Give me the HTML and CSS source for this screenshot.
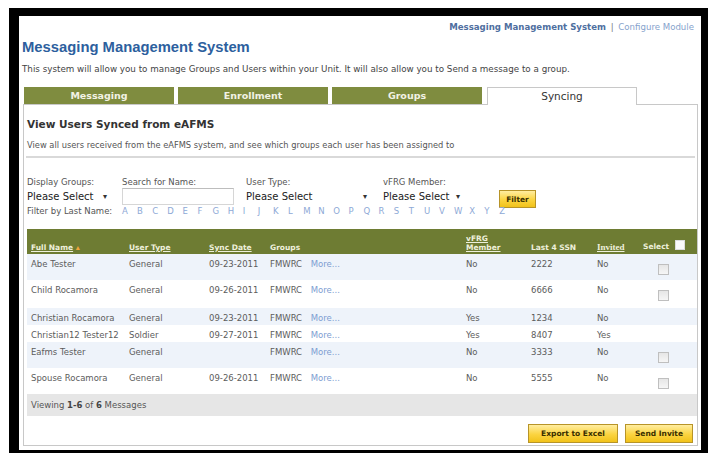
FILE: index.html
```html
<!DOCTYPE html>
<html>
<head>
<meta charset="utf-8">
<title>Messaging Management System</title>
<link rel="stylesheet" href="styles.css">
</head>
<body>
<div class="frame">
  <div class="toplinks">
    <a class="toplink-main" href="#">Messaging Management System</a>
    <span class="sep">|</span>
    <a class="toplink" href="#">Configure Module</a>
  </div>

  <h1 class="title">Messaging Management System</h1>
  <p class="intro">This system will allow you to manage Groups and Users within your Unit. It will also allow you to Send a message to a group.</p>

  <div class="tabs">
    <a class="tab" href="#">Messaging</a>
    <a class="tab" href="#">Enrollment</a>
    <a class="tab" href="#">Groups</a>
    <a class="tab active" href="#">Syncing</a>
  </div>

  <div class="panel">
    <h2 class="heading">View Users Synced from eAFMS</h2>
    <p class="desc">View all users received from the eAFMS system, and see which groups each user has been assigned to</p>
    <div class="rule"></div>

    <div class="filters">
      <div class="field field-groups">
        <span class="label">Display Groups:</span>
        <span class="select">Please Select <span class="caret">&#9662;</span></span>
      </div>
      <div class="field field-search">
        <span class="label">Search for Name:</span>
        <span class="textbox"></span>
      </div>
      <div class="field field-type">
        <span class="label">User Type:</span>
        <span class="select">Please Select <span class="caret">&#9662;</span></span>
      </div>
      <div class="field field-vfrg">
        <span class="label">vFRG Member:</span>
        <span class="select">Please Select <span class="caret">&#9662;</span></span>
      </div>
      <button class="btn btn-filter" type="button">Filter</button>
    </div>

    <div class="letters">
      <span class="letters-label">Filter by Last Name:</span>
      <a href="#">A</a><a href="#">B</a><a href="#">C</a><a href="#">D</a><a href="#">E</a><a href="#">F</a><a href="#">G</a><a href="#">H</a><a href="#">I</a><a href="#">J</a><a href="#">K</a><a href="#">L</a><a href="#">M</a><a href="#">N</a><a href="#">O</a><a href="#">P</a><a href="#">Q</a><a href="#">R</a><a href="#">S</a><a href="#">T</a><a href="#">U</a><a href="#">V</a><a href="#">W</a><a href="#">X</a><a href="#">Y</a><a href="#">Z</a>
    </div>

    <table class="grid">
      <colgroup>
        <col class="c-name"><col class="c-type"><col class="c-date"><col class="c-groups">
        <col class="c-vfrg"><col class="c-ssn"><col class="c-inv"><col class="c-sel">
      </colgroup>
      <thead>
        <tr>
          <th><a href="#">Full Name</a> <span class="sort">&#9652;</span></th>
          <th><a href="#">User Type</a></th>
          <th><a href="#">Sync Date</a></th>
          <th>Groups</th>
          <th><a href="#">vFRG<br>Member</a></th>
          <th>Last 4 SSN</th>
          <th><a class="serif" href="#">Invited</a></th>
          <th class="sel-head">Select <span class="check check-head"></span></th>
        </tr>
      </thead>
      <tbody>
        <tr class="alt tall">
          <td>Abe Tester</td><td>General</td><td>09-23-2011</td>
          <td>FMWRC <a class="more" href="#">More...</a></td>
          <td>No</td><td>2222</td><td>No</td><td class="sel"><span class="check"></span></td>
        </tr>
        <tr class="tall taller">
          <td>Child Rocamora</td><td>General</td><td>09-26-2011</td>
          <td>FMWRC <a class="more" href="#">More...</a></td>
          <td>No</td><td>6666</td><td>No</td><td class="sel"><span class="check"></span></td>
        </tr>
        <tr class="alt short">
          <td>Christian Rocamora</td><td>General</td><td>09-23-2011</td>
          <td>FMWRC <a class="more" href="#">More...</a></td>
          <td>Yes</td><td>1234</td><td>No</td><td class="sel"></td>
        </tr>
        <tr class="short">
          <td>Christian12 Tester12</td><td>Soldier</td><td>09-27-2011</td>
          <td>FMWRC <a class="more" href="#">More...</a></td>
          <td>Yes</td><td>8407</td><td>Yes</td><td class="sel"></td>
        </tr>
        <tr class="alt tall">
          <td>Eafms Tester</td><td>General</td><td></td>
          <td>FMWRC <a class="more" href="#">More...</a></td>
          <td>No</td><td>3333</td><td>No</td><td class="sel"><span class="check"></span></td>
        </tr>
        <tr class="tall">
          <td>Spouse Rocamora</td><td>General</td><td>09-26-2011</td>
          <td>FMWRC <a class="more" href="#">More...</a></td>
          <td>No</td><td>5555</td><td>No</td><td class="sel"><span class="check"></span></td>
        </tr>
      </tbody>
    </table>

    <div class="pager">Viewing <b>1-6</b> of <b>6</b> Messages</div>

    <div class="actions">
      <button class="btn btn-export" type="button">Export to Excel</button>
      <button class="btn btn-invite" type="button">Send Invite</button>
    </div>
  </div>
</div>
</body>
</html>
```

FILE: styles.css
```css
* { box-sizing: border-box; }

html, body {
  margin: 0;
  padding: 0;
  background: #fff;
}

body {
  font-family: "DejaVu Sans", Verdana, sans-serif;
  font-size: 9px;
  color: #555;
}

a { text-decoration: none; }

/* black window frame around the page */
.frame {
  margin: 8px 0 0 9px;
  width: 699px;
  height: 445px;
  border-style: solid;
  border-color: #000;
  border-width: 8px 7px 3px 10px;
  background: #fff;
  overflow: hidden;
}

.toplinks {
  padding: 6px 7px 0 0;
  text-align: right;
  font-size: 8.6px;
  line-height: 11px;
  white-space: nowrap;
}
.toplink-main { color: #4f6f9f; font-weight: bold; }
.sep { color: #777; margin: 0 2px; }
.toplink { color: #86a2cc; }

.title {
  margin: 5px 0 0 3px;
  font-family: "Liberation Sans", Arial, sans-serif;
  font-size: 14.8px;
  line-height: 18px;
  font-weight: bold;
  color: #2d5f9e;
}

.intro {
  margin: 7px 0 0 3px;
  font-size: 8.75px;
  line-height: 12px;
  color: #444;
  white-space: nowrap;
}

/* tab strip */
.tabs {
  display: flex;
  gap: 4px;
  margin: 12px 0 0 5px;
  height: 17px;
  position: relative;
  z-index: 1;
}
.tab {
  width: 150px;
  height: 17px;
  background: #7f8c3f;
  color: #f2f2e4;
  font-weight: bold;
  font-size: 9.5px;
  line-height: 17px;
  text-align: center;
}
.tab.active {
  margin-left: 1px;
  height: 18px;
  background: #fff;
  border: 1px solid #c8c8c8;
  border-bottom: none;
  color: #333;
  font-weight: normal;
  font-size: 10.5px;
  line-height: 17px;
}

.panel {
  margin: 0 3px 0 4px;
  height: 342px;
  border: 1px solid #c8c8c8;
  padding: 0 0 0 3px;
}

.heading {
  margin: 12px 0 0 0;
  font-size: 10.5px;
  line-height: 14px;
  font-weight: bold;
  color: #333;
}

.desc {
  margin: 8px 0 0 0;
  font-size: 8.3px;
  line-height: 12px;
  color: #555;
  white-space: nowrap;
}

.rule {
  margin: 5px 2px 0 -1px;
  height: 2px;
  background: #d9d9d9;
}

/* filter controls */
.filters {
  display: flex;
  align-items: flex-start;
  margin-top: 19px;
  height: 24px;
}
.field {
  display: flex;
  flex-direction: column;
  gap: 0;
}
.label {
  font-size: 8.5px;
  line-height: 11px;
  color: #555;
  white-space: nowrap;
}
.select {
  display: flex;
  align-items: center;
  justify-content: space-between;
  height: 16px;
  padding: 0 3px 0 0;
  font-size: 10px;
  color: #222;
  background: #fff;
  white-space: nowrap;
}
.caret { font-size: 8px; color: #333; margin-left: 5px; }
.textbox {
  display: block;
  height: 17px;
  border: 1px solid #d6d6d6;
  border-top-color: #bdbdbd;
}
.field-groups { width: 95px; }
.field-groups .select { width: 83px; }
.field-search { width: 124px; }
.field-search .textbox { width: 112px; }
.field-type { width: 137px; }
.field-type .select { width: 124px; }
.field-vfrg { width: 116px; }
.field-vfrg .select { width: 80px; }

.btn {
  font-family: "DejaVu Sans", Verdana, sans-serif;
  font-weight: bold;
  font-size: 7.5px;
  color: #3a2f00;
  border: 1px solid #b79428;
  background: linear-gradient(#ffeda0, #fbd440 55%, #f1c21a);
  padding: 0;
  cursor: pointer;
}
.btn-filter {
  margin-top: 13px;
  width: 37px;
  height: 18px;
}

.letters {
  display: flex;
  align-items: center;
  margin-top: 4px;
  height: 12px;
  font-size: 8.5px;
  line-height: 12px;
}
.letters-label { width: 95px; color: #555; white-space: nowrap; }
.letters a {
  width: 15.1px;
  color: #8ea9d6;
}

/* results grid */
.grid {
  margin-top: 12px;
  width: 670px;
  border-collapse: collapse;
  table-layout: fixed;
}
.c-name { width: 98px; }
.c-type { width: 80px; }
.c-date { width: 61px; }
.c-groups { width: 196px; }
.c-vfrg { width: 65px; }
.c-ssn { width: 66px; }
.c-inv { width: 46px; }
.c-sel { width: 58px; }

.grid th {
  height: 25px;
  padding: 0 0 2px 4px;
  background: #6e7c33;
  color: #eef0dc;
  font-size: 7.5px;
  line-height: 9px;
  font-weight: bold;
  text-align: left;
  vertical-align: bottom;
  white-space: nowrap;
}
.grid th a {
  color: #eef0dc;
  text-decoration: underline;
}
.grid th a.serif {
  font-family: "Liberation Serif", "Times New Roman", serif;
  font-size: 9px;
}
.sort { color: #f0a53a; font-size: 8px; }
.grid th.sel-head { padding-left: 4px; padding-bottom: 3px; }

.grid td {
  padding: 4px 0 0 4px;
  font-size: 8.5px;
  line-height: 12px;
  color: #5c5c5c;
  vertical-align: top;
  white-space: nowrap;
  overflow: hidden;
}
.grid tr.alt td { background: #eef3fa; }
.grid tr.tall td { height: 26px; }
.grid tr.taller td { height: 28px; }
.grid tr.short td { height: 17px; }
.grid td.sel { padding: 10px 0 0 19px; }
.more { color: #7d9ed2; margin-left: 6px; }

.check {
  display: inline-block;
  width: 11px;
  height: 11px;
  border: 1px solid #bfbfbf;
  background: linear-gradient(#e6e6e6, #f6f6f6);
  vertical-align: top;
}
.check-head {
  width: 10px;
  height: 10px;
  border-color: #dcdcdc;
  background: #fafafa;
  margin-left: 3px;
  vertical-align: -1px;
}

.pager {
  width: 670px;
  height: 22px;
  padding: 0 0 0 4px;
  background: #e6e6e6;
  font-size: 8.5px;
  line-height: 22px;
  color: #555;
}
.pager b { color: #444; }

.actions {
  display: flex;
  justify-content: flex-end;
  gap: 7px;
  margin: 8px 4px 0 0;
}
.btn-export { width: 90px; height: 19px; }
.btn-invite { width: 68px; height: 19px; }
```
